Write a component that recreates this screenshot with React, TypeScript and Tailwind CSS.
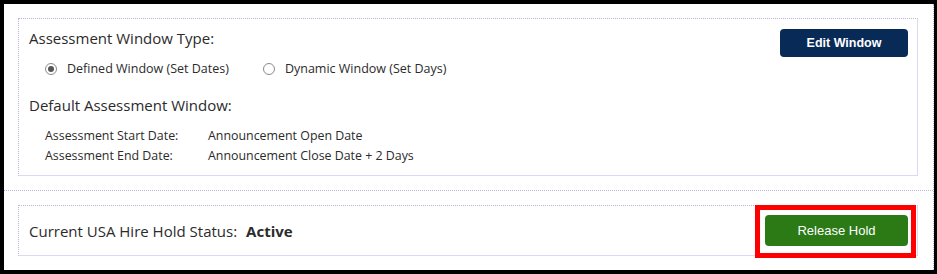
import React from 'react';

const Radio = ({ checked, label }: { checked: boolean; label: string }) => (
  <label className="flex items-center gap-[10px]">
    <span className="flex h-[12px] w-[12px] items-center justify-center rounded-full border border-[#8a8a8a] bg-white">
      {checked && <span className="h-[6px] w-[6px] rounded-full bg-[#555]" />}
    </span>
    <span>{label}</span>
  </label>
);

const App = () => {
  return (
    <div className="h-[274px] w-[937px] bg-black pb-[4px] pl-[4px] pr-[3px] pt-[4px]">
      <div
        className="h-full border-r border-dotted border-[#b8b2d6] bg-white text-[#2b2b2b]"
        style={{ fontFamily: '"Open Sans", "Noto Sans", sans-serif' }}
      >
        {/* Assessment window */}
        <div className="pb-[14px] pl-[14px] pr-[15px] pt-[14px]">
          <div className="flex items-start justify-between border border-b-[#dcd8f2] border-l-[#bcb6da] border-r-[#dcd8f2] border-t-[#bcb6da] border-dotted pb-[9px] pl-[10px] pr-[9px] pt-[9px] [border-bottom-style:solid] [border-right-style:solid]">
            <div>
              <div className="text-[15px] leading-[20px]">Assessment Window Type:</div>
              <div className="mt-[11px] flex gap-[34px] pl-[16px] text-[12.5px] leading-[20px]">
                <Radio checked label="Defined Window (Set Dates)" />
                <Radio checked={false} label="Dynamic Window (Set Days)" />
              </div>
              <div className="mt-[16px] text-[15px] leading-[20px]">Default Assessment Window:</div>
              <div className="mt-[11px] grid grid-cols-[163px_auto] pl-[16px] text-[12.4px] leading-[20px]">
                <span>Assessment Start Date:</span>
                <span>Announcement Open Date</span>
                <span>Assessment End Date:</span>
                <span>Announcement Close Date + 2 Days</span>
              </div>
            </div>
            <button
              className="mt-[1px] h-[28px] w-[128px] rounded-[4px] bg-[#072a57] text-[12.5px] font-bold text-white"
              style={{ fontFamily: '"Liberation Sans", Arial, sans-serif' }}
            >
              Edit Window
            </button>
          </div>
        </div>

        <div className="border-t border-dotted border-[#b8b2d6]" />

        {/* Hold status */}
        <div className="pl-[14px] pr-[15px] pt-[14px]">
          <div className="relative flex h-[51px] items-center justify-between border border-b-[#dcd8f2] border-l-[#bcb6da] border-r-[#dcd8f2] border-t-[#bcb6da] border-dotted pl-[10px] pr-[9px] [border-bottom-style:solid] [border-right-style:solid]">
            <div className="text-[15px] leading-[20px]">
              Current USA Hire Hold Status:<span className="ml-[9px] font-bold">Active</span>
            </div>
            <button
              className="h-[31px] w-[143px] rounded-[4px] bg-[#2b7a16] text-[13px] text-white"
              style={{ fontFamily: '"Liberation Sans", Arial, sans-serif' }}
            >
              Release Hold
            </button>
            <div className="pointer-events-none absolute left-[736px] top-[-1px] h-[53px] w-[161px] border-[5px] border-[#f00]" />
          </div>
        </div>
      </div>
    </div>
  );
};

export default App;
